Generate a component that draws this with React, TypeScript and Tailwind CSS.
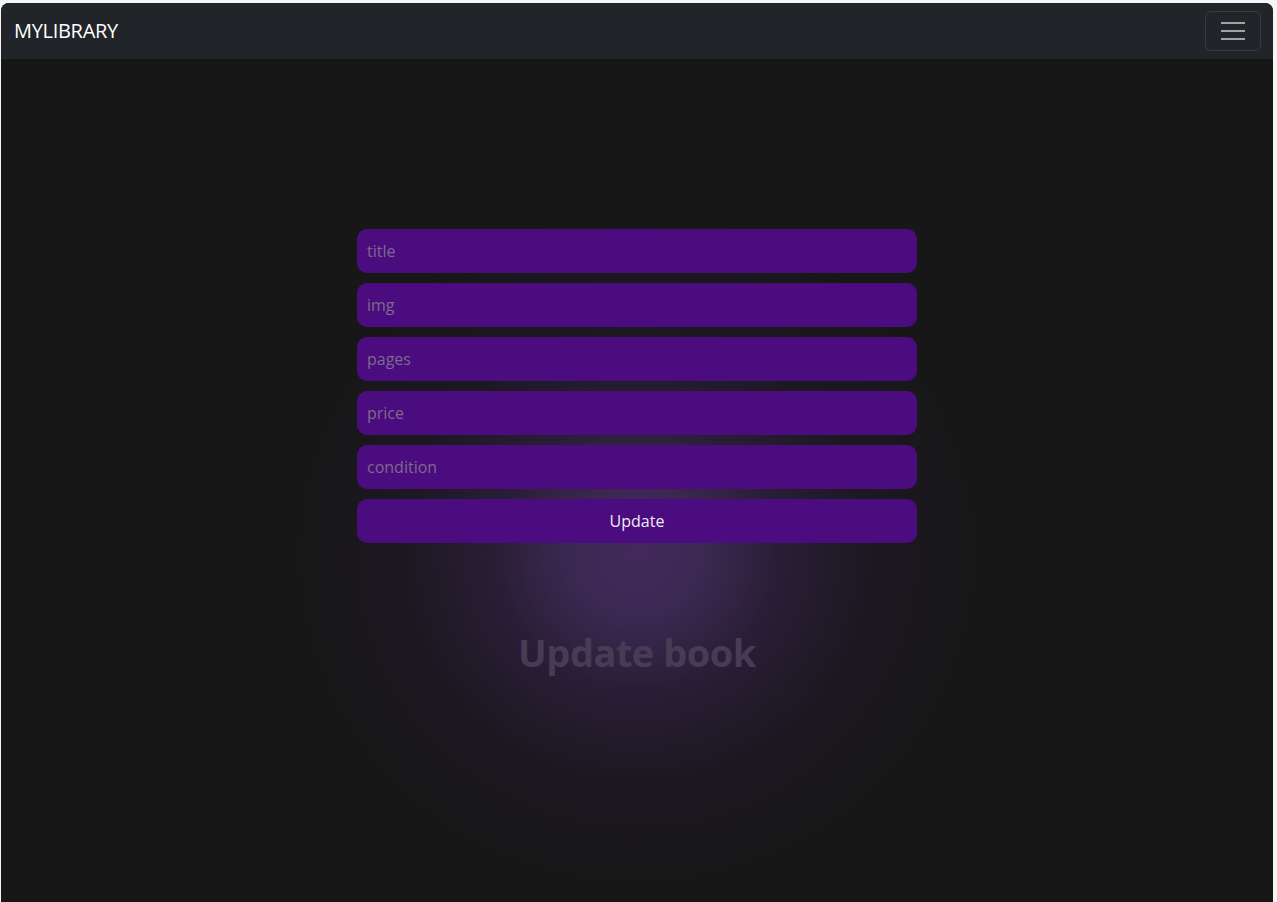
import React from "react";

export default function App() {
  const fields = ["title", "img", "pages", "price", "condition"];
  return (
    <div className="h-[902px] w-full overflow-hidden bg-[#f5f5f5] pt-[3px] pl-[1px] pr-[4px]" style={{ fontFamily: '"Open Sans", "Noto Sans", sans-serif' }}>
      <div className="relative flex h-[899px] flex-col overflow-hidden rounded-t-[8px] bg-[#171717]">
        <nav className="flex h-[56px] shrink-0 items-center justify-between bg-[#212529] pl-[13px] pr-[12px]">
          <span className="text-[20px] leading-none tracking-[-0.3px] text-white">MYLIBRARY</span>
          <button className="flex h-[40px] w-[56px] flex-col items-center justify-center gap-[6px] rounded-[6px] border border-white/10">
            <span className="block h-[2px] w-[24px] bg-[#a0a2a4]" />
            <span className="block h-[2px] w-[24px] bg-[#a0a2a4]" />
            <span className="block h-[2px] w-[24px] bg-[#a0a2a4]" />
          </button>
        </nav>
        <main
          className="relative flex flex-1 flex-col items-center pt-[170px]"
          style={{
            backgroundImage:
              "radial-gradient(ellipse 350px 340px at 636px 495px, rgba(66,42,92,1) 0%, rgba(62,42,86,0.95) 18%, rgba(46,32,62,0.8) 40%, rgba(32,25,42,0.5) 68%, rgba(23,23,23,0) 100%)",
          }}
        >
          <form className="flex w-[560px] flex-col gap-[10px]">
            {fields.map((f) => (
              <input
                key={f}
                placeholder={f}
                className="h-[44px] w-full rounded-[10px] bg-[#4b0c7f] px-[10px] text-[16px] text-white outline-none placeholder:text-[#7d6a8c]"
              />
            ))}
            <button type="button" className="h-[44px] w-full rounded-[10px] bg-[#4b0c7f] text-[16px] text-[#f0eaf6]">
              Update
            </button>
          </form>
          <h1 className="mt-[90px] text-[38px] font-bold leading-none tracking-[-0.5px] text-[#463c55]">Update book</h1>
        </main>
      </div>
    </div>
  );
}
